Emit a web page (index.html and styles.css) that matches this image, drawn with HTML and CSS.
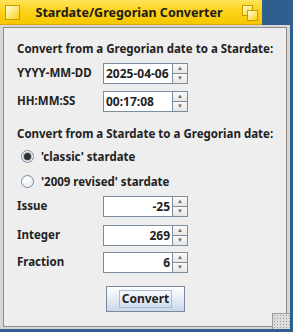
FILE: index.html
```html
<!DOCTYPE html>
<html lang="en">
<head>
  <meta charset="UTF-8" />
  <title>Stardate/Gregorian Converter</title>
  <link rel="stylesheet" href="styles.css">
</head>
<body>
  <div class="window">
    <div class="titlebar">
      <span class="tb-icon"></span>
      <span class="tb-title">Stardate/Gregorian Converter</span>
      <span class="tb-max"><i></i><i></i></span>
    </div>
    <div class="frame">
      <div class="panel">
        <div class="heading h1">Convert from a Gregorian date to a Stardate:</div>

        <div class="row r-date">
          <span class="label">YYYY-MM-DD</span>
          <div class="spinner">
            <div class="field">2025-04-06</div>
            <div class="arrows"><span>&#9652;</span><span>&#9662;</span></div>
          </div>
        </div>
        <div class="row r-time">
          <span class="label">HH:MM:SS</span>
          <div class="spinner">
            <div class="field">00:17:08</div>
            <div class="arrows"><span>&#9652;</span><span>&#9662;</span></div>
          </div>
        </div>

        <div class="heading h2">Convert from a Stardate to a Gregorian date:</div>

        <div class="radio r1"><span class="dot on"></span>'classic' stardate</div>
        <div class="radio r2"><span class="dot"></span>'2009 revised' stardate</div>

        <div class="row r-issue">
          <span class="label">Issue</span>
          <div class="spinner">
            <div class="field num">-25</div>
            <div class="arrows"><span>&#9652;</span><span>&#9662;</span></div>
          </div>
        </div>
        <div class="row r-int">
          <span class="label">Integer</span>
          <div class="spinner">
            <div class="field num">269</div>
            <div class="arrows"><span>&#9652;</span><span>&#9662;</span></div>
          </div>
        </div>
        <div class="row r-frac">
          <span class="label">Fraction</span>
          <div class="spinner">
            <div class="field num">6</div>
            <div class="arrows"><span>&#9652;</span><span>&#9662;</span></div>
          </div>
        </div>

        <div class="actions">
          <button class="btn"><span>Convert</span></button>
        </div>
      </div>
      <div class="grip"></div>
    </div>
  </div>
</body>
</html>
```

FILE: styles.css
```css
body {
  margin: 0;
  width: 293px;
  height: 332px;
  overflow: hidden;
  background: #2f5f8e;
  font-family: "Noto Sans", "DejaVu Sans", sans-serif;
  color: #222;
}

.window {
  width: 290px;
}

.titlebar {
  width: 262px;
  height: 25px;
  box-sizing: border-box;
  display: flex;
  align-items: center;
  padding: 0 5px;
  background: linear-gradient(#ffe45c, #fcd21a 45%, #f6c700);
  border-bottom: 1px solid #d8a900;
}

.tb-icon {
  width: 13px;
  height: 13px;
  border: 1px solid #c79a00;
  background: linear-gradient(135deg, #fffbe0, #ffe466 60%, #f9cf10);
}

.tb-title {
  flex: 1;
  text-align: center;
  font-weight: bold;
  font-size: 12.5px;
  color: #1b1b1b;
  padding-right: 4px;
}

.tb-max {
  position: relative;
  width: 15px;
  height: 15px;
}

.tb-max i {
  position: absolute;
  width: 9px;
  height: 9px;
  border: 1px solid #c79a00;
  background: linear-gradient(135deg, #fffbe0, #ffe466 60%, #f9cf10);
}

.tb-max i:first-child { left: 0; top: 0; }
.tb-max i:last-child { left: 5px; top: 5px; }

.frame {
  position: relative;
  height: 304px;
  box-sizing: border-box;
  padding: 2px 3px 2px 3px;
  background: #d6d6d6;
}

.panel {
  height: 100%;
  box-sizing: border-box;
  border: 1px solid #8d8d8d;
  background: #eeeeee;
  padding: 13px 0 0 13px;
  font-size: 11.5px;
}

.heading {
  font-weight: bold;
  height: 16px;
  line-height: 16px;
  white-space: nowrap;
}

.row {
  display: flex;
  align-items: center;
  height: 21px;
}

.label {
  width: 86px;
  font-weight: bold;
  margin-top: -2px;
}

.r-date { margin-top: 6px; }
.r-time { margin-top: 7px; }
.h2 { margin-top: 14px; }
.r-issue { margin-top: 6px; }
.r-int { margin-top: 8px; }
.r-frac { margin-top: 6px; }

.spinner {
  display: flex;
  width: 85px;
  height: 21px;
}

.field {
  flex: 1;
  box-sizing: border-box;
  background: #fff;
  border: 1px solid #7c8d9e;
  border-right: none;
  font-weight: bold;
  font-size: 12px;
  line-height: 19px;
  padding: 0 2px;
  white-space: nowrap;
  overflow: hidden;
}

.field.num {
  text-align: right;
}

.arrows {
  width: 16px;
  display: flex;
  flex-direction: column;
}

.arrows span {
  flex: 1;
  box-sizing: border-box;
  border: 1px solid #7c8d9e;
  background: linear-gradient(#fafafa, #e6e6e6);
  color: #6a6a6a;
  font-size: 7px;
  line-height: 8px;
  text-align: center;
}

.arrows span + span {
  border-top: none;
}

.radio {
  display: flex;
  align-items: center;
  height: 18px;
  font-weight: bold;
  padding-left: 4px;
}

.r1 { margin-top: 5px; }
.r2 { margin-top: 7px; }

.dot {
  width: 11px;
  height: 11px;
  border: 1px solid #7d8a97;
  border-radius: 50%;
  background: radial-gradient(circle at 40% 35%, #ffffff, #dfe6ee);
  margin-right: 7px;
  position: relative;
}

.dot.on::after {
  content: "";
  position: absolute;
  left: 2px;
  top: 2px;
  width: 7px;
  height: 7px;
  border-radius: 50%;
  background: #2f2f2f;
  box-shadow: 0 0 0 1px #aebfd0;
}

.actions {
  margin-top: 13px;
  padding-left: 89px;
}

.btn {
  width: 79px;
  height: 26px;
  padding: 0;
  border: 1px solid #7a8a9a;
  background: linear-gradient(#ffffff, #e8eef6 45%, #c8d8ea);
  font-family: inherit;
  font-weight: bold;
  font-size: 12px;
  color: #222;
}

.btn span {
  display: inline-block;
  padding: 0 2px;
  border: 1px solid #a8bdd2;
  line-height: 16px;
}

.grip {
  position: absolute;
  right: 0;
  bottom: 0;
  width: 17px;
  height: 15px;
  border-left: 1px solid #9a9a9a;
  border-top: 1px solid #9a9a9a;
  background:
    radial-gradient(circle, #9a9a9a 0.8px, transparent 1px) 0 0 / 3px 3px,
    #dcdcdc;
}
```
